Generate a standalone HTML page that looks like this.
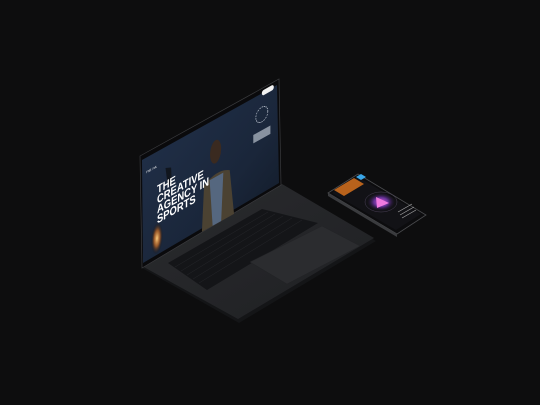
<!DOCTYPE html>
<html><head><meta charset="utf-8"><style>
html,body{margin:0;padding:0;background:#0d0d0e;width:540px;height:405px;overflow:hidden}
svg{display:block}
</style></head><body>
<svg width="540" height="405" viewBox="0 0 540 405" xmlns="http://www.w3.org/2000/svg">
<defs>
<linearGradient id="scr" x1="0" y1="0" x2="1" y2="1">
<stop offset="0" stop-color="#22324c"/><stop offset="0.6" stop-color="#1a263a"/><stop offset="1" stop-color="#0f1722"/>
</linearGradient>
<linearGradient id="base" x1="0" y1="0" x2="1" y2="1">
<stop offset="0" stop-color="#2a2b2e"/><stop offset="1" stop-color="#1f2023"/>
</linearGradient>
<radialGradient id="glow" cx="0.5" cy="0.5" r="0.5">
<stop offset="0" stop-color="#e85fd0"/><stop offset="0.5" stop-color="#8a3fd0" stop-opacity="0.7"/><stop offset="1" stop-color="#2a1a40" stop-opacity="0"/>
</radialGradient>
<radialGradient id="fire" cx="0.5" cy="0.5" r="0.5">
<stop offset="0" stop-color="#ffcf80"/><stop offset="0.5" stop-color="#c86a20" stop-opacity="0.7"/><stop offset="1" stop-color="#000" stop-opacity="0"/>
</radialGradient>
</defs>
<!-- base -->
<polygon points="142,268 282,186 376,241 239,323" fill="#141517"/>
<polygon points="142,266 282,184 374,238 238,319" fill="url(#base)"/>
<!-- keyboard -->
<polygon points="168,263 262,209 318,223 207,290" fill="#141518"/>
<g stroke="#26272b" stroke-width="0.5">
<line x1="175" y1="267" x2="268" y2="212"/><line x1="181" y1="271" x2="275" y2="214"/><line x1="187" y1="275" x2="283" y2="216"/><line x1="193" y1="279" x2="292" y2="218"/><line x1="199" y1="283" x2="302" y2="220"/>
</g>
<!-- trackpad -->
<polygon points="250,262 322,226 360,246 287,284" fill="#2b2c2f" stroke="#222326" stroke-width="0.5"/>
<!-- lid -->
<polygon points="140,156 279,79 281,185 142,268" fill="#0a0a0c" stroke="#3a3b3e" stroke-width="0.7"/>
<polygon points="142,160 277,85 279,183 143,263" fill="url(#scr)"/>
<g transform="matrix(0.428,-0.2375,0,0.525,142,160)">
<path d="M140 200 L145 115 Q175 95 205 112 L215 200 Z" fill="#4b4232"/>
<path d="M158 110 L165 200 L185 200 L190 110 Z" fill="#55677f"/>
<ellipse cx="172" cy="62" rx="13" ry="22" fill="#3a2a20"/>
<path d="M55 40 L60 75 L70 80 L68 45 Z" fill="#11161e"/>
<circle cx="280" cy="40" r="14" fill="none" stroke="#cfd6e0" stroke-width="1.5" stroke-dasharray="3 2"/>
<rect x="260" y="70" width="40" height="16" fill="#b8c0cc" opacity="0.7"/>
<rect x="280" y="-5" width="28" height="10" rx="5" fill="#f2f2f2"/>
<ellipse cx="35" cy="165" rx="14" ry="30" fill="url(#fire)"/>
<text x="10" y="30" font-family="Liberation Sans, sans-serif" font-size="6" fill="#fff">FNE / ML</text>
<g font-family="Liberation Sans, sans-serif" font-weight="bold" font-size="22" fill="#fff">
<text x="35" y="80">THE</text>
<text x="35" y="99">CREATIVE</text>
<text x="35" y="118">AGENCY IN</text>
<text x="35" y="137">SPORTS</text>
</g>
</g>
<!-- phone -->
<polygon points="328,193 358,174 426,215 397,234" fill="#0c0c0e" stroke="#4a4b4e" stroke-width="0.8"/>
<polygon points="328,196 397,237 397,234 328,193" fill="#3a3b3e"/>
<polygon points="332,193 358,177 421,214 396,230" fill="#121216"/>
<polygon points="334,190 354,178 364,184 344,196" fill="#b8621c"/>
<polygon points="356,177 361,174 366,177 361,180" fill="#3aa6e8"/>
<ellipse cx="381" cy="202" rx="14" ry="9" fill="url(#glow)"/>
<ellipse cx="381" cy="202" rx="16" ry="10" fill="none" stroke="#4a4058" stroke-width="0.5"/>
<polygon points="376,197 389,203 377,208" fill="#f07ae0"/>
<g stroke="#aaa" stroke-width="0.6">
<line x1="398" y1="212" x2="412" y2="204"/><line x1="400" y1="215" x2="414" y2="207"/><line x1="402" y1="218" x2="416" y2="210"/>
</g>
</svg>
</body></html>
